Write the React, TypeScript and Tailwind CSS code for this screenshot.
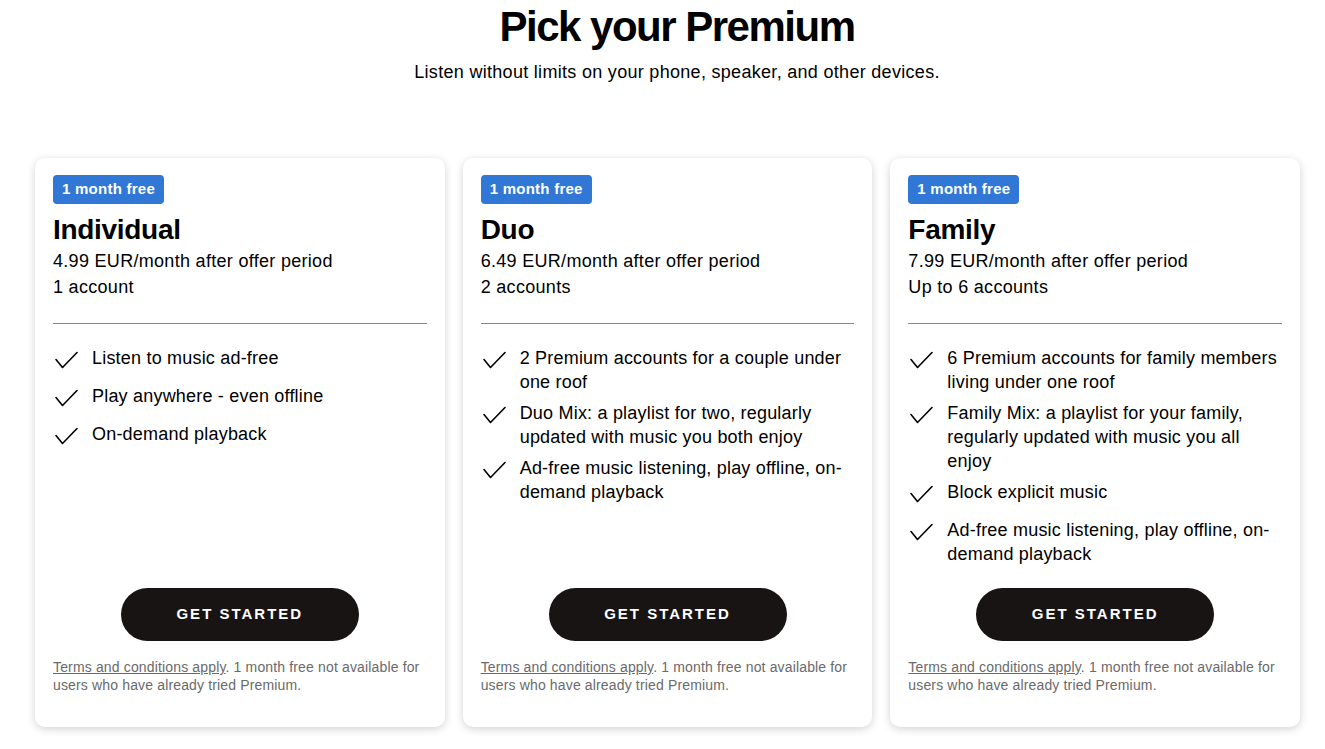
import React from "react";

interface Plan {
  name: string;
  price: string;
  accounts: string;
  features: string[];
}

const plans: Plan[] = [
  {
    name: "Individual",
    price: "4.99 EUR/month after offer period",
    accounts: "1 account",
    features: ["Listen to music ad-free", "Play anywhere - even offline", "On-demand playback"],
  },
  {
    name: "Duo",
    price: "6.49 EUR/month after offer period",
    accounts: "2 accounts",
    features: [
      "2 Premium accounts for a couple under one roof",
      "Duo Mix: a playlist for two, regularly updated with music you both enjoy",
      "Ad-free music listening, play offline, on-demand playback",
    ],
  },
  {
    name: "Family",
    price: "7.99 EUR/month after offer period",
    accounts: "Up to 6 accounts",
    features: [
      "6 Premium accounts for family members living under one roof",
      "Family Mix: a playlist for your family, regularly updated with music you all enjoy",
      "Block explicit music",
      "Ad-free music listening, play offline, on-demand playback",
    ],
  },
];

const Check = () => (
  <svg width="25" height="24" viewBox="0 0 25 24" fill="none" className="shrink-0">
    <path d="M3 13.5 L9.5 21.5 L24 6.5" stroke="#000" strokeWidth="1.6" strokeLinecap="round" strokeLinejoin="round" />
  </svg>
);

const PlanCard: React.FC<{ plan: Plan }> = ({ plan }) => (
  <div className="flex-1 h-[569px] bg-white rounded-[10px] shadow-[0_2px_8px_rgba(0,0,0,0.18)] px-[18px] pt-[17px] pb-[33px] flex flex-col">
    {/* header */}
    <div>
      <span className="inline-flex items-center h-[29px] px-[9px] rounded-[4px] bg-[#3177d6] text-white text-[15px] font-bold tracking-[0.25px]">
        1 month free
      </span>
    </div>
    <h2 className="mt-[10px] text-[28px] leading-[32px] font-bold tracking-[-0.3px] text-black">{plan.name}</h2>
    <p className="mt-[2px] text-[18px] leading-[26px] tracking-[0.3px] text-black">{plan.price}</p>
    <p className="text-[18px] leading-[26px] tracking-[0.3px] text-black">{plan.accounts}</p>

    <hr className="mt-[23px] border-0 h-px bg-[#878787]" />

    {/* features */}
    <ul className="mt-[22px] flex flex-col gap-[7px]">
      {plan.features.map((f) => (
        <li key={f} className="flex gap-[14px] min-h-[31px]">
          <Check />
          <span className="text-[18px] leading-[24px] tracking-[0.2px] text-black">{f}</span>
        </li>
      ))}
    </ul>

    <div className="mt-auto flex flex-col">
      <button className="self-center w-[238px] h-[53px] rounded-full bg-[#191414] text-white text-[15px] font-bold tracking-[2px] uppercase">
        Get started
      </button>
      <p className="mt-[17px] text-[14px] leading-[18px] tracking-[0.15px] text-[#6a6a6a]">
        <span className="underline">Terms and conditions apply</span>. 1 month free not available for users who have
        already tried Premium.
      </p>
    </div>
  </div>
);

export default function App() {
  return (
    <div className="min-h-screen bg-white font-['Liberation_Sans',Arial,sans-serif]">
      <div className="pt-[3px] pl-[29px] text-center">
        <h1 className="text-[42px] leading-[48px] font-bold tracking-[-1.5px] text-black">Pick your Premium</h1>
        <p className="mt-[9px] text-[18px] leading-[24px] tracking-[0.3px] text-black">
          Listen without limits on your phone, speaker, and other devices.
        </p>
      </div>
      <div className="mt-[74px] pl-[35px] pr-[25px] flex gap-[18px]">
        {plans.map((p) => (
          <PlanCard key={p.name} plan={p} />
        ))}
      </div>
    </div>
  );
}
